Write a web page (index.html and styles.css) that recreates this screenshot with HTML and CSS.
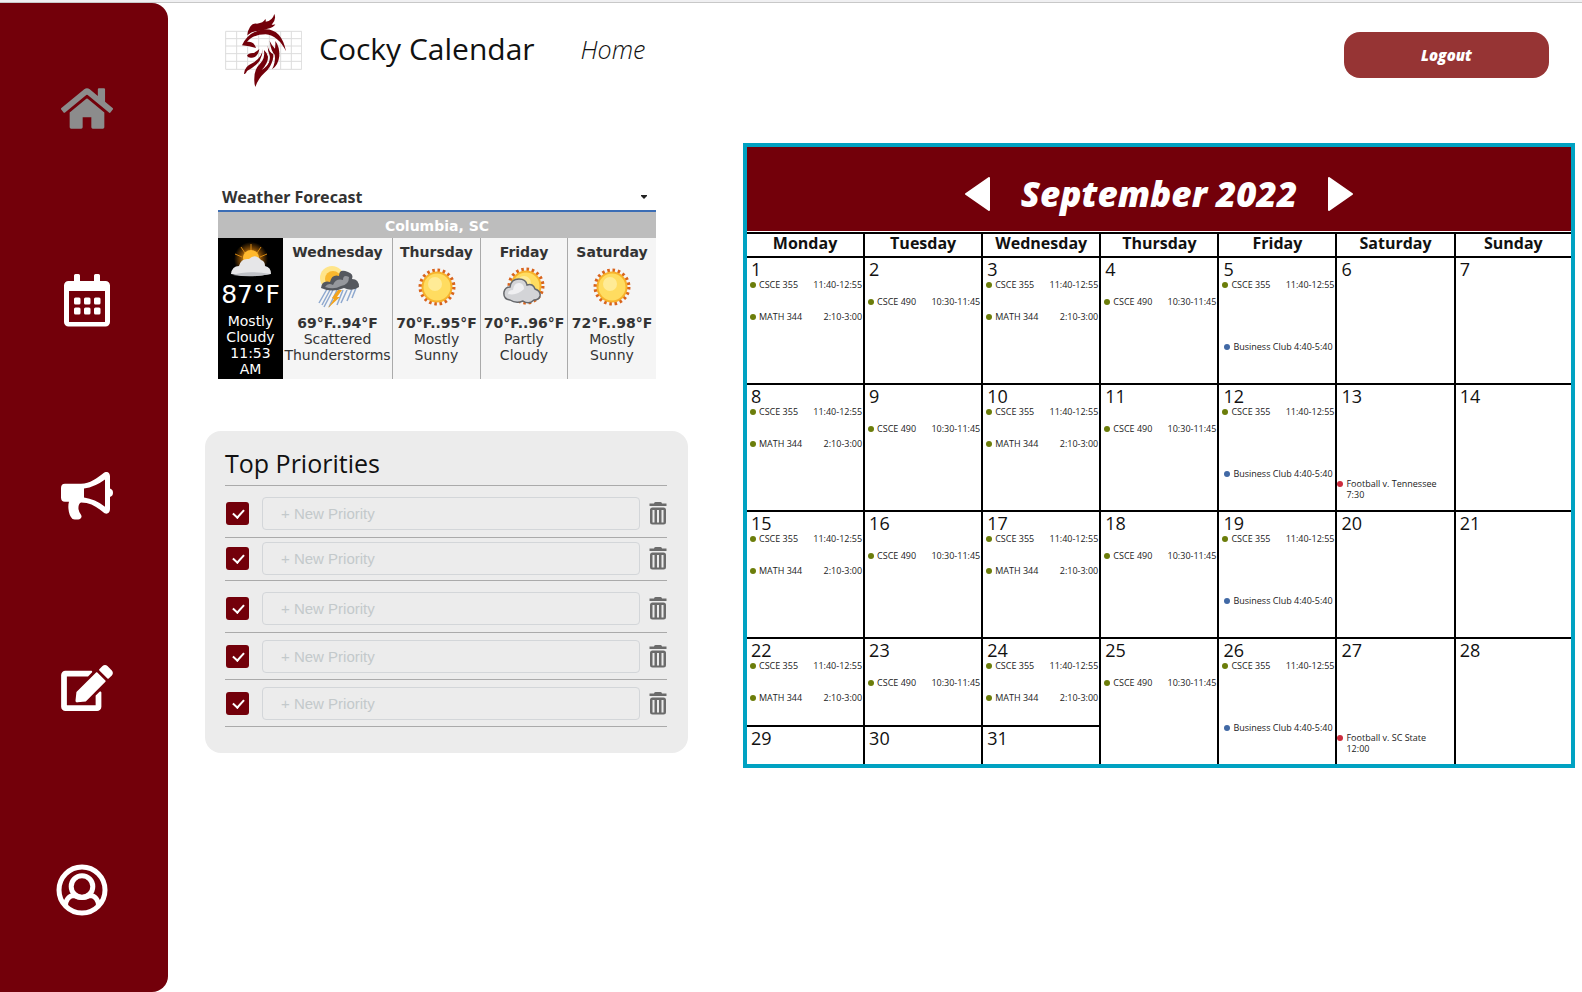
FILE: index.html
```html
<!DOCTYPE html>
<html lang="en">
<head>
<meta charset="utf-8">
<title>Cocky Calendar</title>
<link rel="stylesheet" href="styles.css">
</head>
<body>
<div class="app">
  <nav class="sidebar" aria-label="Main">
    <div class="nav-group">
      <a class="nav-link nav-current" href="#home" aria-label="Home">
        <svg width="52" height="41" viewBox="0 32 576 448"><path fill="currentColor" d="M280.37 148.26L96 300.11V464a16 16 0 0 0 16 16h112a16 16 0 0 0 16-16V352h96v112a16 16 0 0 0 16 16h112a16 16 0 0 0 16-16V300L295.67 148.26a12.19 12.19 0 0 0-15.3 0zM571.6 251.47L488 182.56V44.05a12 12 0 0 0-12-12h-56a12 12 0 0 0-12 12v72.61L318.47 43a48 48 0 0 0-61 0L4.34 251.47a12 12 0 0 0-1.6 16.9l25.5 31A12 12 0 0 0 45.15 301l235.22-193.74a12.19 12.19 0 0 1 15.3 0L530.9 301a12 12 0 0 0 16.9-1.6l25.5-31a12 12 0 0 0-1.7-16.93z"/></svg>
      </a>
      <a class="nav-link" href="#calendar" aria-label="Calendar">
        <svg width="52" height="53" viewBox="-3 0 52 53"><path fill="currentColor" fill-rule="evenodd" d="M11.500 0h3a1.500 1.500 0 0 1 1.500 1.500V7h14V1.500A1.500 1.500 0 0 1 31.500 0h3A1.500 1.500 0 0 1 36 1.500V7h5.500A4.500 4.500 0 0 1 46 11.500v36.500a4.500 4.500 0 0 1-4.500 4.500h-37A4.500 4.500 0 0 1 0 48v-36.500A4.500 4.500 0 0 1 4.500 7H10V1.500A1.500 1.500 0 0 1 11.500 0zM5 17v31h36V17z"/><g fill="currentColor"><rect x="10" y="23.500" width="6.500" height="7" rx="1.500"/><rect x="20" y="23.500" width="6.500" height="7" rx="1.500"/><rect x="30" y="23.500" width="6.500" height="7" rx="1.500"/><rect x="10" y="33.500" width="6.500" height="7" rx="1.500"/><rect x="20" y="33.500" width="6.500" height="7" rx="1.500"/><rect x="30" y="33.500" width="6.500" height="7" rx="1.500"/></g></svg>
      </a>
      <a class="nav-link" href="#announcements" aria-label="Announcements">
        <svg width="52" height="48" viewBox="0 0 52 45" preserveAspectRatio="none"><path fill="currentColor" fill-rule="evenodd" d="M4 11H20C29 11 36 6 42 1.500C45 -1.500 49 0 49 4V15.500Q52 16.500 52 19.500Q52 22.500 49 23.500V35C49 39 45 40.500 42 37.500C35 32 29 28.500 20 28.500Q17 30 17.500 35Q17.700 37 20 40Q21.500 42.500 19 44Q16 45 11.500 44Q8 41 7.500 35Q7 31 8 28H4Q0 28 0 24V15Q0 11 4 11zM23 15.500V24Q34 25.500 44 32.500V7Q34 14 23 15.500z"/></svg>
      </a>
      <a class="nav-link" href="#edit" aria-label="Edit">
        <svg width="52" height="46" viewBox="0 0 576 512"><path fill="currentColor" d="M402.600 83.200l90.200 90.200c3.800 3.800 3.800 10 0 13.800L274.400 405.600l-92.800 10.300c-12.400 1.400-22.900-9.100-21.500-21.500l10.300-92.800L388.800 83.200c3.800-3.800 10-3.800 13.800 0zm162-22.900l-48.800-48.800c-15.200-15.200-39.900-15.200-55.200 0l-35.400 35.400c-3.800 3.800-3.800 10 0 13.800l90.200 90.200c3.800 3.800 10 3.800 13.800 0l35.400-35.400c15.200-15.300 15.200-40 0-55.200zM384 346.200V448H64V128h229.800c3.200 0 6.200-1.300 8.500-3.500l40-40c7.600-7.600 2.200-20.500-8.500-20.500H48C21.500 64 0 85.500 0 112v352c0 26.500 21.500 48 48 48h352c26.500 0 48-21.500 48-48V306.200c0-10.700-12.900-16-20.500-8.500l-40 40c-2.200 2.300-3.500 5.300-3.500 8.500z"/></svg>
      </a>
    </div>
    <div class="nav-group nav-profile">
      <a class="nav-link" href="#profile" aria-label="Profile">
        <svg width="52" height="52" viewBox="0 0 52 52" fill="none" stroke="currentColor" stroke-width="5"><circle cx="26" cy="26" r="23"/><circle cx="26" cy="22.500" r="10.800"/><path d="M9.500 42C9.500 36 13 31.500 18 31.500Q26 35.500 34 31.500C39 31.500 42.500 36 42.500 42"/></svg>
      </a>
    </div>
  </nav>

  <div class="page">
    <header class="topbar">
      <svg class="logo" viewBox="30 27 231 219" role="img" aria-label="Rooster logo">
        <path fill="none" stroke="#dcdcdc" stroke-width="3" d="M32 79H260V193H32ZM32 101H260M32 123H260M32 146H260M32 169H260M65 79V193M98 79V193M131 79V193M163 79V193M197 79V193M229 79V193"/>
        <g fill="#73000a">
          <path d="M97 91Q98 76 105 66Q113 54 126 56Q145 54 151 42Q153 45 152 50Q172 48 178 27Q185 44 170 59Q178 60 181 58Q176 68 158 71Q140 79 123 78Q108 80 97 91Z"/>
          <path d="M81 121Q98 84 138 74Q198 64 213 139Q190 92 152 88Q112 88 96 111Q116 107 123 129Q103 123 81 121Z"/>
          <path d="M96 152Q101 143 116 144Q126 139 133 132Q129 157 111 158Q100 160 96 152Z"/>
          <path d="M143 131Q141 158 113 174Q88 184 87 206Q92 209 96 198Q122 184 134 167Q143 151 143 131Z"/>
          <path d="M147 135Q151 160 135 176Q118 192 118 220Q117 235 121 246Q130 220 148 204Q170 185 173 161L168 163Q156 187 140 195Q160 173 159 155Q156 143 147 135Z"/>
          <path d="M158 121Q158 140 164 151Q168 160 158 183Q178 168 175 148Q160 140 158 121Z"/>
          <path d="M164 108Q171 123 180 131Q182 117 181 108Q194 125 193 153Q190 181 171 193Q183 170 179 149Q168 139 164 108Z"/>
        </g>
      </svg>
      <h1 class="brand">Cocky Calendar</h1>
      <span class="crumb">Home</span>
      <button class="logout" type="button">Logout</button>
    </header>

    <main class="content">
      <div class="left">
        <section class="weather" aria-label="Weather">
          <div class="weather-head">
            <h2 class="weather-title">Weather Forecast</h2>
            <button class="weather-menu" type="button" aria-label="Weather options"><svg width="8" height="5" viewBox="0 0 8 5"><path d="M1 0H7V1L4 4L1 1Z" fill="#222"/></svg></button>
          </div>
          <div class="weather-city">Columbia, SC</div>
          <div class="weather-grid">
            <div class="now">
              <svg width="52" height="38" viewBox="0 0 52 38">
                <defs><radialGradient id="glow"><stop offset="0.300" stop-color="#e8981a"/><stop offset="0.650" stop-color="#6e3f04"/><stop offset="1" stop-color="#000"/></radialGradient></defs>
                <circle cx="26" cy="18" r="17" fill="url(#glow)"/><path stroke="#d98a12" d="M26 3V10M16 6L20 12M36 6L32 12M10 13L17 16M42 13L35 16"/>
                <circle cx="26" cy="17" r="8" fill="#ffb92e"/>
                <path fill="#e6e6e8" d="M6 33Q7 25 14 25Q16 17 24 18Q30 12 36 19Q40 20 40 25Q46 26 46 33Q26 37 6 33Z"/>
                <path fill="#bfc1c6" d="M8 34Q22 29 45 33Q28 37 8 34Z"/>
              </svg>
              <div class="now-temp">87°F</div>
              <div>Mostly</div><div>Cloudy</div><div>11:53</div><div>AM</div>
            </div>
            <div class="day">
              <div class="day-name">Wednesday</div>
              <svg class="day-icon" viewBox="0 0 44 44">
                <circle cx="16" cy="13" r="12" fill="#ffe58a"/><circle cx="17" cy="14" r="8" fill="#f9b82e"/>
                <path stroke="#8fa9cf" stroke-width="1.500" d="M11 24L3 38M14 25L6 40M17 25L8 42M21 25L13 42M27 25L21 40M31 25L25 38M36 24L31 36M40 23L36 33"/>
                <path fill="#55585e" d="M5 23Q6 15 14 17Q16 9 23 11Q23 3 32 7Q38 9 36 14Q43 14 43 22Q36 27 28 23Q16 28 5 23Z"/>
                <path fill="#96989d" d="M9 22Q12 17 17 20Q20 13 27 15Q27 9 33 12Q33 20 25 21Q18 25 9 22Z"/>
                <path fill="#f3a31b" d="M22 25L26 25L21 32L24 32L12 43L18 34L16 33Z"/>
              </svg>
              <div class="day-temp">69°F..94°F</div>
              <div>Scattered</div><div>Thunderstorms</div>
            </div>
            <div class="day">
              <div class="day-name">Thursday</div>
              <svg class="day-icon" viewBox="0 0 44 44"><g id="sun"><circle cx="22" cy="22" r="16.500" fill="none" stroke="#d8631c" stroke-width="4" stroke-dasharray="2.500 2.684"/><circle cx="22" cy="22" r="15.500" fill="#f7b22c"/><circle cx="22" cy="22" r="13.500" fill="#ffdc60"/><circle cx="20" cy="19" r="7" fill="#ffeb96"/></g></svg>
              <div class="day-temp">70°F..95°F</div>
              <div>Mostly</div><div>Sunny</div>
            </div>
            <div class="day">
              <div class="day-name">Friday</div>
              <svg class="day-icon" viewBox="0 0 44 44"><use href="#sun" x="2" y="-1"/><path fill="#d3d4d7" stroke="#66686c" stroke-width="1.500" d="M8 35Q1 34 2 27Q3 22 8 22Q9 14 17 14Q24 14 25 20Q31 18 33 24Q39 26 38 31Q37 35 32 35Q27 40 21 36Q14 39 8 35Z"/><path fill="#efeff1" d="M6 29Q6 25 11 25Q12 17 18 18Q22 19 22 24Q15 31 6 29Z"/></svg>
              <div class="day-temp">70°F..96°F</div>
              <div>Partly</div><div>Cloudy</div>
            </div>
            <div class="day">
              <div class="day-name">Saturday</div>
              <svg class="day-icon" viewBox="0 0 44 44"><use href="#sun"/></svg>
              <div class="day-temp">72°F..98°F</div>
              <div>Mostly</div><div>Sunny</div>
            </div>
          </div>
        </section>

        <section class="priorities">
          <h2 class="priorities-title">Top Priorities</h2>
          <svg class="defs" width="0" height="0" aria-hidden="true"><symbol id="trash" viewBox="0 0 18 23"><path fill="#6b6b6b" fill-rule="evenodd" d="M5 1.500Q5 0 6.500 0H11.500Q13 0 13 1.500H17.500V4H.5V1.500ZM3.500 5.500H14.500Q17 5.500 17 8V20Q17 22.500 14.500 22.500H3.500Q1 22.500 1 20V8Q1 5.500 3.500 5.500ZM3.500 8V20.500H5.500V8ZM8 8V20.500H10V8ZM12.500 8V20.500H14.500V8Z"/></symbol></svg>
          <ul class="priority-list">
            <li class="priority roomy"><input class="check" type="checkbox" checked aria-label="Priority 1 done"><input class="field" type="text" placeholder="+ New Priority" aria-label="Priority 1"><button class="trash" type="button" aria-label="Delete priority 1"><svg width="18" height="23"><use href="#trash"/></svg></button></li>
            <li class="priority tight"><input class="check" type="checkbox" checked aria-label="Priority 2 done"><input class="field" type="text" placeholder="+ New Priority" aria-label="Priority 2"><button class="trash" type="button" aria-label="Delete priority 2"><svg width="18" height="23"><use href="#trash"/></svg></button></li>
            <li class="priority roomy"><input class="check" type="checkbox" checked aria-label="Priority 3 done"><input class="field" type="text" placeholder="+ New Priority" aria-label="Priority 3"><button class="trash" type="button" aria-label="Delete priority 3"><svg width="18" height="23"><use href="#trash"/></svg></button></li>
            <li class="priority"><input class="check" type="checkbox" checked aria-label="Priority 4 done"><input class="field" type="text" placeholder="+ New Priority" aria-label="Priority 4"><button class="trash" type="button" aria-label="Delete priority 4"><svg width="18" height="23"><use href="#trash"/></svg></button></li>
            <li class="priority"><input class="check" type="checkbox" checked aria-label="Priority 5 done"><input class="field" type="text" placeholder="+ New Priority" aria-label="Priority 5"><button class="trash" type="button" aria-label="Delete priority 5"><svg width="18" height="23"><use href="#trash"/></svg></button></li>
          </ul>
        </section>
      </div>

      <section class="calendar" aria-label="Calendar">
        <div class="month-bar">
          <button class="month-step" type="button" aria-label="Previous month"><svg width="25" height="34" viewBox="0 0 25 34"><path fill="#fff" stroke="#fff" stroke-width="2" stroke-linejoin="round" d="M24 1V33L1 17Z"/></svg></button>
          <h2 class="month">September 2022</h2>
          <button class="month-step" type="button" aria-label="Next month"><svg width="25" height="34" viewBox="0 0 25 34"><path fill="#fff" stroke="#fff" stroke-width="2" stroke-linejoin="round" d="M1 1V33L24 17Z"/></svg></button>
        </div>
        <table class="month-table">
          <thead><tr><th>Monday</th><th>Tuesday</th><th>Wednesday</th><th>Thursday</th><th>Friday</th><th>Saturday</th><th>Sunday</th></tr></thead>
          <tbody>
            <tr class="week">
              <td><div class="date">1</div><div class="event"><span>CSCE 355</span><time>11:40-12:55</time></div><div class="event later"><span>MATH 344</span><time>2:10-3:00</time></div></td>
              <td><div class="date">2</div><div class="event midday"><span>CSCE 490</span><time>10:30-11:45</time></div></td>
              <td><div class="date">3</div><div class="event"><span>CSCE 355</span><time>11:40-12:55</time></div><div class="event later"><span>MATH 344</span><time>2:10-3:00</time></div></td>
              <td><div class="date">4</div><div class="event midday"><span>CSCE 490</span><time>10:30-11:45</time></div></td>
              <td><div class="date">5</div><div class="event"><span>CSCE 355</span><time>11:40-12:55</time></div><div class="event club"><span>Business Club 4:40-5:40</span></div></td>
              <td><div class="date">6</div></td>
              <td><div class="date">7</div></td>
            </tr>
            <tr class="week">
              <td><div class="date">8</div><div class="event"><span>CSCE 355</span><time>11:40-12:55</time></div><div class="event later"><span>MATH 344</span><time>2:10-3:00</time></div></td>
              <td><div class="date">9</div><div class="event midday"><span>CSCE 490</span><time>10:30-11:45</time></div></td>
              <td><div class="date">10</div><div class="event"><span>CSCE 355</span><time>11:40-12:55</time></div><div class="event later"><span>MATH 344</span><time>2:10-3:00</time></div></td>
              <td><div class="date">11</div><div class="event midday"><span>CSCE 490</span><time>10:30-11:45</time></div></td>
              <td><div class="date">12</div><div class="event"><span>CSCE 355</span><time>11:40-12:55</time></div><div class="event club"><span>Business Club 4:40-5:40</span></div></td>
              <td><div class="date">13</div><div class="event game"><span>Football v. Tennessee<br>7:30</span></div></td>
              <td><div class="date">14</div></td>
            </tr>
            <tr class="week">
              <td><div class="date">15</div><div class="event"><span>CSCE 355</span><time>11:40-12:55</time></div><div class="event later"><span>MATH 344</span><time>2:10-3:00</time></div></td>
              <td><div class="date">16</div><div class="event midday"><span>CSCE 490</span><time>10:30-11:45</time></div></td>
              <td><div class="date">17</div><div class="event"><span>CSCE 355</span><time>11:40-12:55</time></div><div class="event later"><span>MATH 344</span><time>2:10-3:00</time></div></td>
              <td><div class="date">18</div><div class="event midday"><span>CSCE 490</span><time>10:30-11:45</time></div></td>
              <td><div class="date">19</div><div class="event"><span>CSCE 355</span><time>11:40-12:55</time></div><div class="event club"><span>Business Club 4:40-5:40</span></div></td>
              <td><div class="date">20</div></td>
              <td><div class="date">21</div></td>
            </tr>
            <tr class="week-split">
              <td><div class="date">22</div><div class="event"><span>CSCE 355</span><time>11:40-12:55</time></div><div class="event later"><span>MATH 344</span><time>2:10-3:00</time></div></td>
              <td><div class="date">23</div><div class="event midday"><span>CSCE 490</span><time>10:30-11:45</time></div></td>
              <td><div class="date">24</div><div class="event"><span>CSCE 355</span><time>11:40-12:55</time></div><div class="event later"><span>MATH 344</span><time>2:10-3:00</time></div></td>
              <td rowspan="2"><div class="date">25</div><div class="event midday"><span>CSCE 490</span><time>10:30-11:45</time></div></td>
              <td rowspan="2"><div class="date">26</div><div class="event"><span>CSCE 355</span><time>11:40-12:55</time></div><div class="event club"><span>Business Club 4:40-5:40</span></div></td>
              <td rowspan="2"><div class="date">27</div><div class="event game"><span>Football v. SC State<br>12:00</span></div></td>
              <td rowspan="2"><div class="date">28</div></td>
            </tr>
            <tr class="week-last">
              <td><div class="date">29</div></td>
              <td><div class="date">30</div></td>
              <td><div class="date">31</div></td>
            </tr>
          </tbody>
        </table>
      </section>
    </main>
  </div>
</div>
</body>
</html>
```
FILE: styles.css
```css
* { box-sizing: border-box; }

:root {
  --garnet: #73000a;
  --ui: "Open Sans", "Noto Sans", sans-serif;
}

body {
  margin: 0;
  background: #fff;
  border-top: 2px solid #f0f0f2;
  color: #111;
  font-family: var(--ui);
}

h1, h2, ul { margin: 0; padding: 0; font-weight: 400; }
button { border: 0; padding: 0; background: none; font-family: inherit; cursor: pointer; }
svg { display: block; }

.app {
  display: flex;
  min-height: calc(100vh - 2px);
  border-top: 1px solid #c8c8c8;
}

/* Sidebar */
.sidebar {
  flex: 0 0 168px;
  padding-top: 85px;
  background: var(--garnet);
  border-radius: 0 16px 16px 0;
}
.nav-group { display: flex; flex-direction: column; align-items: flex-start; gap: 145px; padding-left: 61px; }
.nav-profile { padding: 153px 0 0 56px; }
.nav-link { color: #fff; }
.nav-current { color: #8c8c8c; }

/* Page */
.page { flex: 1; min-width: 0; padding: 11px 7px 24px 37px; }
.topbar { display: flex; align-items: center; padding: 0 26px 0 20px; }
.logo { width: 77px; height: 73px; margin-right: 17px; }
.brand { font-size: 30px; line-height: 36px; padding-bottom: 4px; font-weight: 500; }
.crumb { margin-left: 46px; font-size: 25px; line-height: 36px; padding-bottom: 4px; font-weight: 300; font-style: italic; }
.logout {
  align-self: flex-end;
  width: 205px;
  height: 46px;
  margin: 0 0 9px auto;
  border-radius: 16px;
  background: #963434;
  color: #fff;
  font-size: 15px;
  font-weight: 800;
  font-style: italic;
}

.content {
  display: grid;
  grid-template-columns: minmax(0, 483fr) minmax(0, 832fr);
  gap: 55px;
  align-items: start;
  padding-top: 56px;
}

/* Weather */
.weather {
  margin: 44px 32px 52px 13px;
  font-family: "DejaVu Sans", sans-serif;
  font-size: 14px;
  line-height: 16px;
  color: #333;
}
.weather-head {
  display: flex;
  align-items: center;
  justify-content: space-between;
  height: 25px;
  padding: 0 8px 3px 4px;
  border-bottom: 2px solid #3b6db5;
}
.weather-title { font: 700 16px/20px "Noto Sans", sans-serif; color: #333; }
.weather-city {
  height: 26px;
  background: #bdbdbd;
  color: #fff;
  font-weight: 700;
  line-height: 28px;
  text-align: center;
}
.weather-grid {
  display: grid;
  grid-template-columns: 65fr 110fr 88fr 87fr 88fr;
  text-align: center;
}
.now { display: flex; flex-direction: column; align-items: center; padding: 3px 0 2px; background: #000; color: #fff; }
.now-temp { font-size: 25px; line-height: 36px; }
.now svg { margin-bottom: -2px; }
.day { display: flex; flex-direction: column; align-items: center; background: #f5f5f5; border-right: 1px solid #aaa; }
.day:last-child { border-right: 0; }
.day-name { padding-top: 6px; font-weight: 700; }
.day-icon { width: 44px; height: 44px; margin: 5px 0 6px; }
.day-temp { font-weight: 700; }

/* Priorities */
.priorities { padding: 12px 21px 26px 20px; border-radius: 16px; background: #ececec; }
.priorities-title { padding-bottom: 2px; font-size: 25px; line-height: 40px; }
.defs { position: absolute; }
.priority-list { border-top: 1px solid #aaa; list-style: none; }
.priority { display: flex; align-items: center; padding: 7px 0 6px 1px; border-bottom: 1px solid #aaa; }
.roomy { padding-top: 11px; padding-bottom: 7px; }
.tight { padding-top: 4px; padding-bottom: 5px; }
.check {
  appearance: none;
  flex: none;
  width: 23px;
  height: 23px;
  margin: 0 13px 0 0;
  border-radius: 3px;
  background: var(--garnet);
}
.check:checked::before {
  content: "";
  display: block;
  width: 5px;
  height: 9px;
  margin: 5px 0 0 9px;
  border: solid #fff;
  border-width: 0 2px 2px 0;
  transform: rotate(42deg);
}
.field {
  flex: 1;
  min-width: 0;
  height: 33px;
  padding: 0 18px;
  border: 1px solid #d3d6d9;
  border-radius: 4px;
  background: transparent;
  font: 15px "Liberation Sans", Arial, sans-serif;
}
.field::placeholder { color: #c3c9cb; opacity: 1; }
.trash { margin-left: 9px; }

/* Calendar */
.calendar { border: 4px solid #00a2c2; }
.month-bar {
  display: flex;
  align-items: center;
  justify-content: center;
  gap: 31px;
  height: 84px;
  padding-top: 10px;
  background: var(--garnet);
}
.month { color: #fff; font-size: 35px; line-height: 44px; font-weight: 800; font-style: italic; }
.month-table {
  width: 100%;
  margin-top: 1px;
  border-top: 2px solid #000;
  border-spacing: 0;
  table-layout: fixed;
}
.month-table th, .month-table td { padding: 0; border: solid #000; border-width: 0 2px 2px 0; vertical-align: top; }
.month-table th:last-child, .week td:last-child, .week-split td:last-child { border-right: 0; }
.month-table th:last-child { width: 14%; }
.week-last td, .week-split td[rowspan] { border-bottom: 0; }
.month-table th { height: 24px; font-size: 16px; line-height: 18px; font-weight: 700; }
.week { height: 127px; }
.week-split { height: 88px; }
.week-last { height: 37px; }

.date { height: 21px; padding: 1px 0 0 4px; font-size: 18px; line-height: 20px; }
.event {
  display: flex;
  align-items: flex-start;
  gap: 3px;
  padding: 0 1px 0 3px;
  color: #222;
  font-size: 9px;
  line-height: 11px;
  white-space: nowrap;
}
.event::before {
  content: "";
  flex: none;
  width: 6px;
  height: 6px;
  margin-top: 3px;
  border-radius: 50%;
  background: #6b7d0a;
}
.event time { margin-left: auto; }
.later { margin-top: 21px; }
.midday { margin-top: 17px; }
.club { margin-top: 51px; padding-left: 5px; }
.club::before { background: #4169a5; }
.game { margin-top: 72px; padding-left: 0; }
.game::before { background: #cc2b3d; }
```
